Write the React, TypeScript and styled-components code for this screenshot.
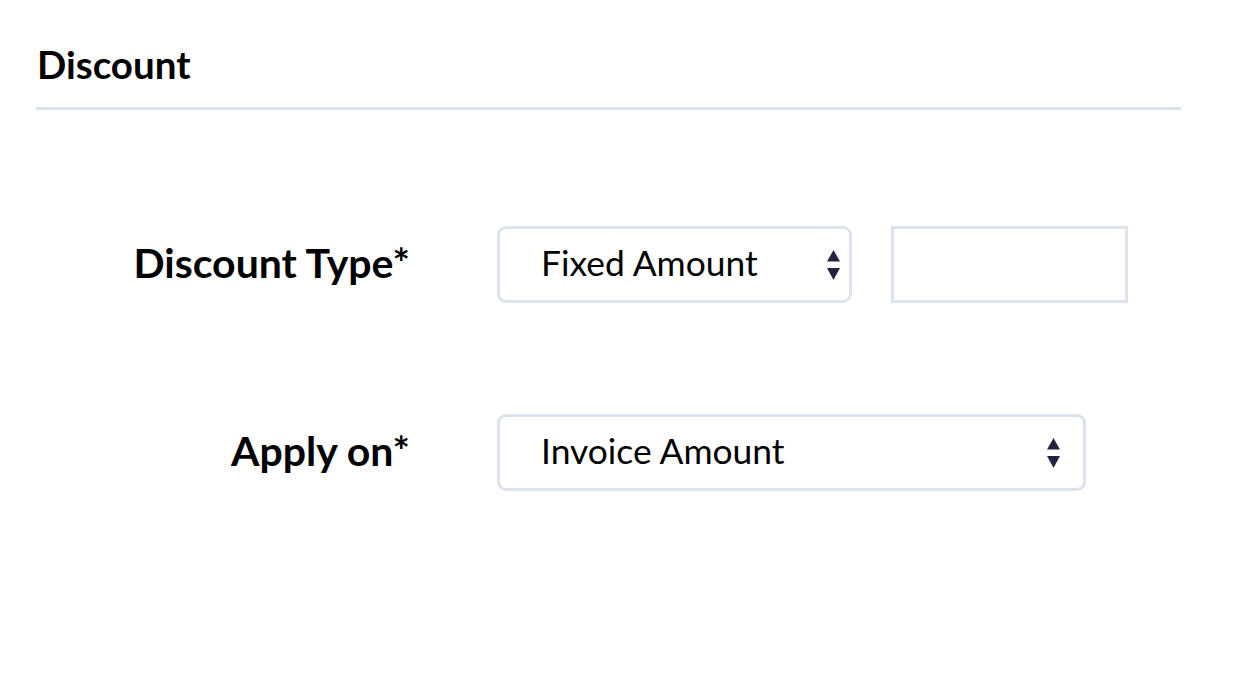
import React from "react";
import styled, { createGlobalStyle } from "styled-components";

const Global = createGlobalStyle`
  html, body { margin: 0; padding: 0; background: #ffffff; }
  body { font-family: Lato, "Open Sans", sans-serif; color: #000; }
`;

const Page = styled.div`
  padding: 36px 55px 0 36px;
`;

const Heading = styled.h2`
  margin: 0;
  font-size: 38.5px;
  font-weight: 700;
  line-height: 56px;
  padding-left: 1px;
  color: #000;
`;

const Divider = styled.div`
  height: 3px;
  background: #dde3ec;
  margin-top: 15px;
`;

const Form = styled.div`
  display: grid;
  grid-template-columns: 374px auto;
  column-gap: 87px;
  row-gap: 111px;
  margin-top: 116px;
  align-items: center;
`;

const Label = styled.label`
  text-align: right;
  font-size: 41px;
  font-weight: 700;
  line-height: 50px;
  margin-top: -4px;
  color: #000;
`;

const Controls = styled.div`
  display: flex;
  align-items: center;
  gap: 39px;
`;

const Select = styled.div<{ $width: number; $arrowPad: number }>`
  box-sizing: border-box;
  width: ${(p) => p.$width}px;
  height: 77px;
  border: 3px solid #dde3ec;
  border-radius: 9px;
  display: flex;
  align-items: center;
  justify-content: space-between;
  padding: 0 ${(p) => p.$arrowPad}px 0 41px;
  font-size: 35.4px;
  color: #000;
  background: #fff;
`;

const SelectText = styled.span`
  line-height: 40px;
  margin-top: -4px;
`;

const Input = styled.div`
  box-sizing: border-box;
  width: 237px;
  height: 77px;
  border: 3px solid #dde3ec;
  background: #fff;
`;

const Arrows = () => (
  <svg width="13" height="30" viewBox="0 0 13 30">
    <polygon points="6.5,0 13,11.5 0,11.5" fill="#22243f" />
    <polygon points="0,18 13,18 6.5,30" fill="#22243f" />
  </svg>
);

export default function App() {
  return (
    <>
      <Global />
      <Page>
        <Heading>Discount</Heading>
        <Divider />
        <Form>
          <Label>Discount Type*</Label>
          <Controls>
            <Select $width={355} $arrowPad={9}>
              <SelectText>Fixed Amount</SelectText>
              <Arrows />
            </Select>
            <Input />
          </Controls>
          <Label>Apply on*</Label>
          <Controls>
            <Select $width={589} $arrowPad={23}>
              <SelectText>Invoice Amount</SelectText>
              <Arrows />
            </Select>
          </Controls>
        </Form>
      </Page>
    </>
  );
}
